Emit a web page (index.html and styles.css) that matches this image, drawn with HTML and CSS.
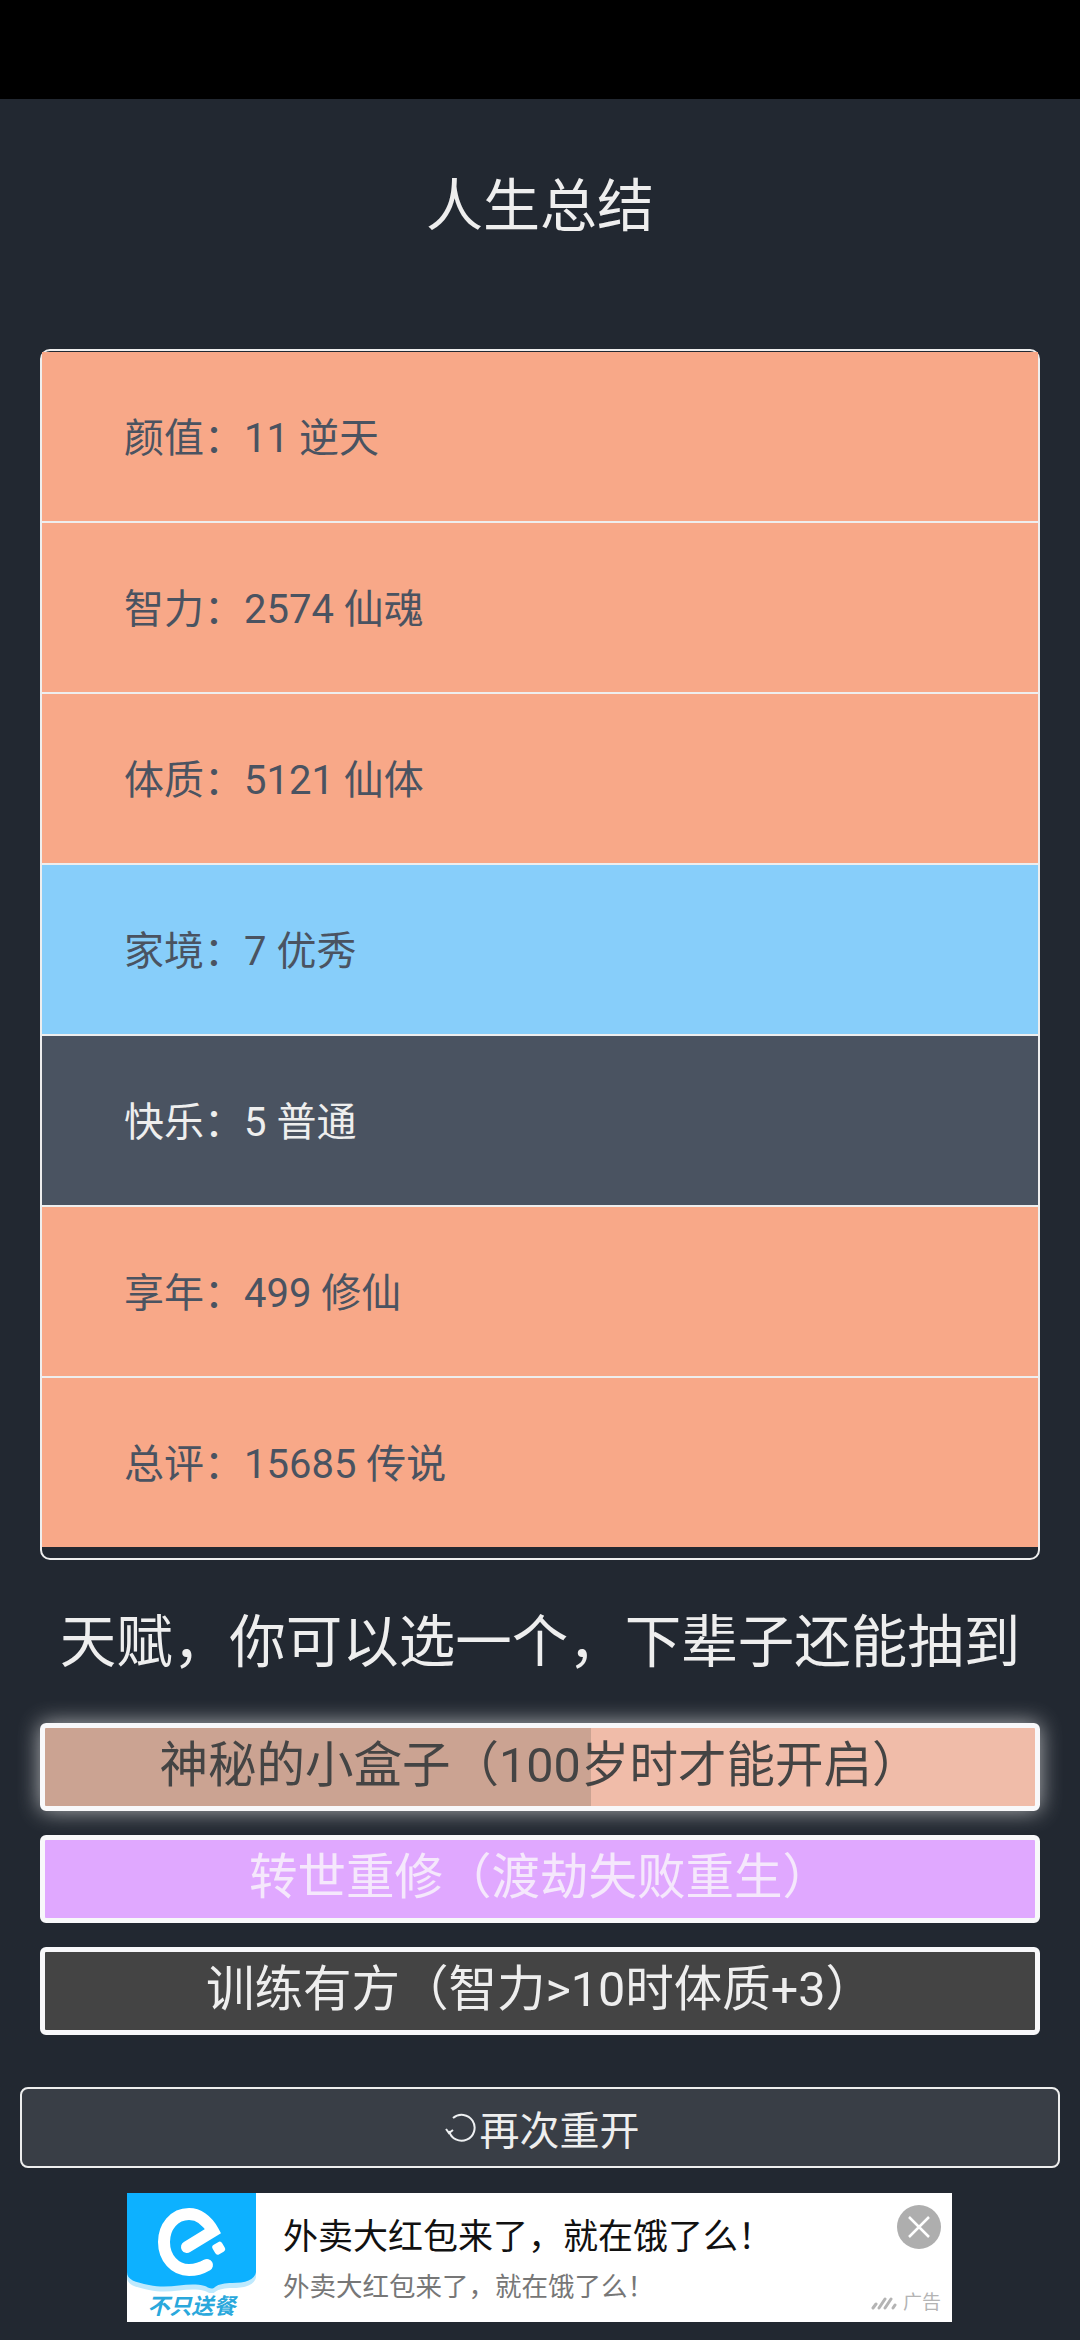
FILE: index.html
```html
<!DOCTYPE html>
<html lang="zh-CN">
	<head>
		<title>人生总结</title>
		<meta charset="utf-8">
		<link rel="stylesheet" href="styles.css">
	</head>
	<body>
		<div class="statusbar"></div>
		<h1 class="title">人生总结</h1>
		<ul class="summary">
			<li class="row row-orange">颜值&#xFF1A;11 逆天</li>
			<li class="row row-orange">智力&#xFF1A;2574 仙魂</li>
			<li class="row row-orange">体质&#xFF1A;5121 仙体</li>
			<li class="row row-blue">家境&#xFF1A;7 优秀</li>
			<li class="row row-grey">快乐&#xFF1A;5 普通</li>
			<li class="row row-orange">享年&#xFF1A;499 修仙</li>
			<li class="row row-orange">总评&#xFF1A;15685 传说</li>
		</ul>
		<h2 class="subtitle">天赋&#xFF0C;你可以选一个&#xFF0C;下辈子还能抽到</h2>
		<div class="talents">
			<div class="talent talent-box">神秘的小盒子&#xFF08;100岁时才能开启&#xFF09;</div>
			<div class="talent talent-purple">转世重修&#xFF08;渡劫失败重生&#xFF09;</div>
			<div class="talent talent-dark">训练有方&#xFF08;智力&gt;10时体质+3&#xFF09;</div>
		</div>
		<div class="restart">
			<svg class="restart-icon" viewBox="0 0 32 32" width="32" height="32">
				<path d="M8 5 A13 13 0 1 1 4 18" fill="none" stroke="#eef0f2" stroke-width="2"/>
				<path d="M1 16 L4 20 L8 17" fill="none" stroke="#eef0f2" stroke-width="2"/>
			</svg>
			<span>再次重开</span>
		</div>
		<div class="ad">
			<div class="ad-logo">
				<svg class="ad-logo-mark" viewBox="0 0 129 100" width="129" height="100">
					<path d="M0 0 H129 V84 C128 92 118 95 105 95 C98 95 92 96 88 99 C85 102 82 100 78 98 C60 93 45 102 22 97 C8 94 0 92 0 84 Z" fill="#bfe9fd"/>
					<path d="M0 0 H129 V79 C128 87 118 90 105 90 C98 90 92 91 88 94 C85 97 82 95 78 93 C60 88 45 97 22 92 C8 89 0 87 0 79 Z" fill="#0db1ff"/>
					<path d="M60 54 L86 38 C80 27 71 21 62 21 C47 21 37 34 37 49 C37 65 48 77 62 77 C69 77 75 75 80 72" fill="none" stroke="#fff" stroke-width="12" stroke-linecap="round"/>
					<rect x="86" y="50" width="11" height="11" rx="3" transform="rotate(-30 91 55)" fill="#fff"/>
				</svg>
				<span class="ad-slogan">不只送餐</span>
			</div>
			<div class="ad-text">
				<div class="ad-title">外卖大红包来了&#xFF0C;就在饿了么&#xFF01;</div>
				<div class="ad-sub">外卖大红包来了&#xFF0C;就在饿了么&#xFF01;</div>
			</div>
			<div class="ad-close">
				<svg viewBox="0 0 44 44" width="44" height="44">
					<path d="M12 12 L32 32 M32 12 L12 32" stroke="#fff" stroke-width="2.5"/>
				</svg>
			</div>
			<div class="ad-mark">
				<svg viewBox="0 0 26 14" width="26" height="14">
					<path d="M2 12 L5 8 M8 12 L14 3 M14 12 L20 3 M22 12 L24 9" stroke="#b4b4b4" stroke-width="3" stroke-linecap="round"/>
				</svg>
				<span>广告</span>
			</div>
		</div>
	</body>
</html>
```

FILE: styles.css
```css
html, body {
	margin: 0;
	height: 2340px;
	overflow: hidden;
	background-color: #222831;
	color: #eeeeee;
	font-family: Roboto, "Noto Sans CJK SC", sans-serif;
}
.statusbar {
	height: 99px;
	background-color: #000;
}
.title {
	margin: 68px 0 0;
	height: 182px;
	line-height: 80px;
	font-size: 57px;
	font-weight: 400;
	text-align: center;
}
.summary {
	list-style: none;
	margin: 0 40px;
	padding: 1px 0 11px;
	height: 1211px;
	box-sizing: border-box;
	border: 2px solid #eeeeee;
	border-radius: 10px;
}
.row {
	height: 169px;
	line-height: 173px;
	padding-left: 82px;
	font-size: 40px;
	color: #4a5361;
	border-bottom: 2px solid #eeeeee;
}
.row:last-child {
	border-bottom: 0;
}
.row-orange {
	background-color: #f8a888;
}
.row-blue {
	background-color: #87cefa;
}
.row-grey {
	background-color: #4a5361;
	color: #eeeeee;
}
.subtitle {
	margin: 43px 0 40px;
	line-height: 80px;
	font-size: 56.5px;
	font-weight: 400;
	text-align: center;
}
.talents {
	display: flex;
	flex-direction: column;
	gap: 24px;
	margin: 0 40px;
}
.talent {
	height: 88px;
	box-sizing: border-box;
	border: 5px solid #f8f8fa;
	border-radius: 6px;
	line-height: 76px;
	font-size: 48.5px;
	text-align: center;
}
.talent-box {
	background: linear-gradient(to right, #cba392 0, #cba392 546px, #f0bca9 546px);
	color: #444444;
	box-shadow: 0 0 22px rgba(238, 238, 238, 0.7);
}
.talent-purple {
	background-color: #e0a8ff;
	color: #f5e8fc;
}
.talent-dark {
	background-color: #444444;
	color: #eeeeee;
}
.restart {
	display: flex;
	align-items: center;
	justify-content: center;
	gap: 3px;
	height: 81px;
	box-sizing: border-box;
	margin: 52px 20px 0;
	padding-left: 4px;
	border: 2px solid #eeeeee;
	border-radius: 8px;
	background-color: #393e46;
	font-size: 40px;
}
.restart-icon {
	margin-top: 3px;
}
.ad {
	position: relative;
	display: flex;
	width: 825px;
	height: 129px;
	margin: 25px 0 0 127px;
	background-color: #fff;
}
.ad-logo {
	display: flex;
	flex-direction: column;
	align-items: center;
	width: 129px;
}
.ad-logo-mark {
	display: block;
}
.ad-slogan {
	margin-top: 1px;
	line-height: 26px;
	font-size: 22px;
	font-weight: 700;
	font-style: italic;
	color: #2aa8dc;
}
.ad-text {
	padding: 25px 0 0 27px;
}
.ad-title {
	line-height: 40px;
	font-size: 35px;
	color: #111;
}
.ad-sub {
	margin-top: 12px;
	line-height: 34px;
	font-size: 26.5px;
	color: #777;
}
.ad-close {
	position: absolute;
	top: 12px;
	right: 11px;
	width: 44px;
	height: 44px;
	border-radius: 50%;
	background-color: #aeaeae;
}
.ad-mark {
	position: absolute;
	right: 11px;
	bottom: 7px;
	display: flex;
	align-items: center;
	gap: 6px;
	font-size: 19px;
	line-height: 24px;
	color: #b4b4b4;
}
```
